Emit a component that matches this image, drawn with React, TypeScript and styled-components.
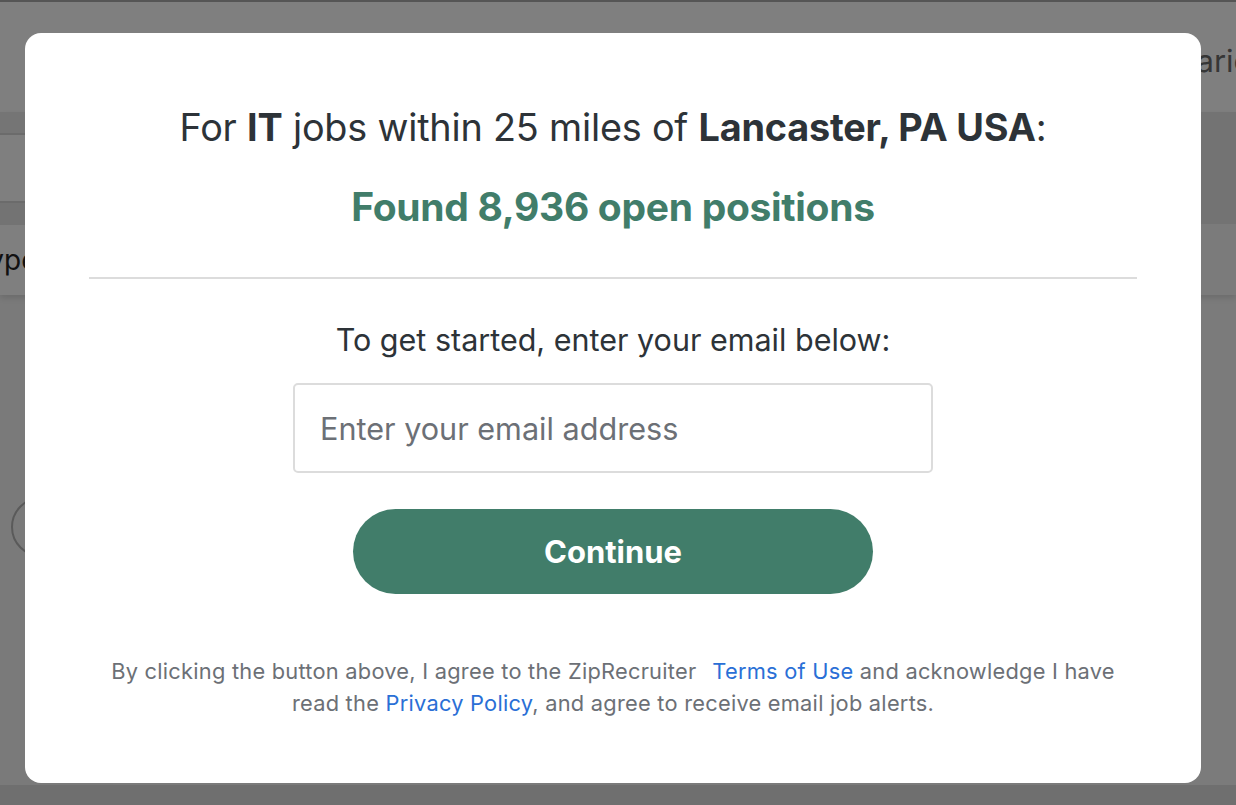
import React from "react";
import styled, { createGlobalStyle } from "styled-components";

const GlobalStyle = createGlobalStyle`
  * { box-sizing: border-box; }
  html, body {
    margin: 0;
    padding: 0;
    overflow: hidden;
  }
  body {
    font-family: Inter, "Noto Sans", "Liberation Sans", sans-serif;
    background: #dedede;
  }
`;

// Page behind the overlay

const Page = styled.div`
  width: 1236px;
  height: 805px;
  background: #dedede;
  overflow: hidden;
`;

const TopBar = styled.header`
  height: 112px;
  background: #fff;
  border-top: 2px solid #aaa;
  display: flex;
  justify-content: flex-end;
  align-items: center;
  overflow: hidden;
`;

const NavLink = styled.span`
  font-size: 31px;
  color: #6c6c6c;
  margin-right: -32px;
  margin-top: 6px;
`;

const FilterArea = styled.div`
  display: flex;
  height: 183px;
  box-shadow: 0 3px 6px rgba(0, 0, 0, 0.12);
  position: relative;
`;

const FilterLeft = styled.div`
  flex: 1;
  display: flex;
  flex-direction: column;
`;

const FilterRight = styled.div`
  width: 260px;
  display: flex;
  flex-direction: column;
`;

const Stripe = styled.div<{ $h: number; $bg: string; $border?: boolean }>`
  height: ${(p) => p.$h}px;
  background: ${(p) => p.$bg};
  border-bottom: ${(p) => (p.$border ? "2px solid #d6d6d6" : "none")};
  display: flex;
  align-items: center;
  font-size: 28px;
  color: #222;
  padding-left: 8px;
`;

const ClippedText = styled.span`
  margin-left: -36px;
`;

const Body = styled.div`
  display: flex;
  height: 490px;
`;

const Sidebar = styled.aside`
  width: 113px;
  background: #f4f4f4;
  padding: 202px 0 0 11px;
`;

const RoundButton = styled.div`
  width: 60px;
  height: 60px;
  border-radius: 50%;
  border: 2px solid #b4b4b4;
`;

const MainPane = styled.main`
  flex: 1;
  background: #f6f6f6;
`;

// Overlay + modal

const Overlay = styled.div`
  position: fixed;
  inset: 0;
  background: rgba(0, 0, 0, 0.5);
  display: flex;
  justify-content: center;
  align-items: flex-start;
  padding: 33px 10px 0 0;
`;

const Modal = styled.div`
  width: 1176px;
  height: 750px;
  background: #fff;
  border-radius: 16px;
  padding: 0 64px;
  display: flex;
  flex-direction: column;
  align-items: center;
  text-align: center;
`;

const Heading = styled.h2`
  margin: 72px 0 0;
  font-size: 37.8px;
  line-height: 44px;
  font-weight: 400;
  color: #2d3338;
  letter-spacing: -0.2px;

  b {
    font-weight: 700;
  }
`;

const FoundText = styled.p`
  margin: 36px 0 0;
  font-size: 39px;
  line-height: 44px;
  font-weight: 700;
  color: #417d6a;
  letter-spacing: -0.3px;
`;

const Divider = styled.hr`
  align-self: stretch;
  margin: 48px 0 0;
  border: none;
  border-top: 2px solid #dcdcdc;
`;

const Prompt = styled.p`
  margin: 43px 0 0;
  font-size: 30.5px;
  line-height: 36px;
  color: #2d3338;
`;

const EmailInput = styled.input`
  margin-top: 25px;
  width: 640px;
  height: 90px;
  border: 2px solid #dcdcdc;
  border-radius: 5px;
  padding: 0 25px;
  font-family: inherit;
  font-size: 30.6px;
  color: #2d3338;
  outline: none;

  &::placeholder {
    color: #6c7076;
  }
`;

const ContinueButton = styled.button`
  margin-top: 36px;
  width: 520px;
  height: 85px;
  border: none;
  border-radius: 43px;
  background: #417d6a;
  color: #fff;
  font-family: inherit;
  font-size: 31px;
  font-weight: 700;
  cursor: pointer;
`;

const Legal = styled.p`
  margin: 61px 0 0;
  max-width: 1010px;
  font-size: 21.8px;
  line-height: 32px;
  letter-spacing: 0.25px;
  color: #6c7076;
`;

const LegalLink = styled.a<{ $gap?: boolean }>`
  color: #2a6fd6;
  text-decoration: none;
  margin-left: ${(p) => (p.$gap ? "16px" : "0")};
`;

export default function App() {
  return (
    <>
      <GlobalStyle />
      <Page>
        <TopBar>
          <NavLink>Salaries</NavLink>
        </TopBar>
        <FilterArea>
          <FilterLeft>
            <Stripe $h={23} $bg="#ebebeb" $border />
            <Stripe $h={68} $bg="#fff" $border />
            <Stripe $h={22} $bg="#e7e7e7" />
            <Stripe $h={70} $bg="#fff">
              <ClippedText>Type</ClippedText>
            </Stripe>
          </FilterLeft>
          <FilterRight>
            <Stripe $h={112} $bg="#e7e7e7" />
            <Stripe $h={71} $bg="#f6f6f6" />
          </FilterRight>
        </FilterArea>
        <Body>
          <Sidebar>
            <RoundButton />
          </Sidebar>
          <MainPane />
        </Body>
      </Page>
      <Overlay>
        <Modal>
          <Heading>
            For <b>IT</b> jobs within 25 miles of <b>Lancaster, PA USA</b>:
          </Heading>
          <FoundText>Found 8,936 open positions</FoundText>
          <Divider />
          <Prompt>To get started, enter your email below:</Prompt>
          <EmailInput type="email" placeholder="Enter your email address" />
          <ContinueButton>Continue</ContinueButton>
          <Legal>
            By clicking the button above, I agree to the ZipRecruiter
            <LegalLink href="#" $gap>
              Terms of Use
            </LegalLink>{" "}
            and acknowledge I have read the{" "}
            <LegalLink href="#">Privacy Policy</LegalLink>, and agree to receive
            email job alerts.
          </Legal>
        </Modal>
      </Overlay>
    </>
  );
}
